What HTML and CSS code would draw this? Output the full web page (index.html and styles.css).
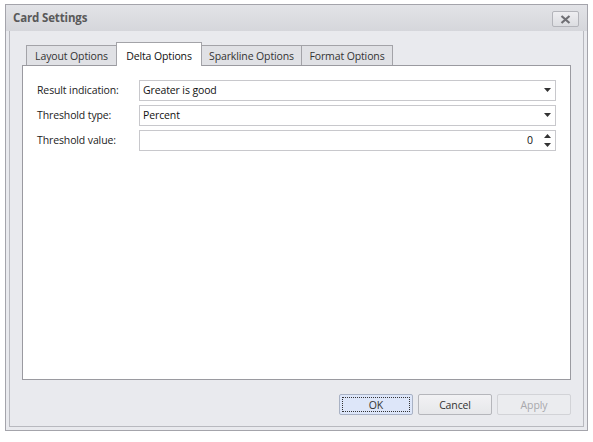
FILE: index.html
```html
<!DOCTYPE html>
<html>
<head>
<meta charset="utf-8">
<link rel="stylesheet" href="styles.css">
</head>
<body>
<div class="window">
  <div class="titlebar">
    <span class="title">Card Settings</span>
    <button class="close" aria-label="Close">
      <svg width="11" height="9" viewBox="0 0 11 9"><path d="M1.5 1 L9.5 8 M9.5 1 L1.5 8" stroke="#6f6f74" stroke-width="2.2" fill="none"/></svg>
    </button>
  </div>
  <div class="frame">
    <div class="tabcontrol">
      <div class="tabs">
        <div class="tab t-layout">Layout Options</div>
        <div class="tab active t-delta">Delta Options</div>
        <div class="tab t-spark">Sparkline Options</div>
        <div class="tab t-format">Format Options</div>
      </div>
      <div class="panel">
        <div class="row">
          <label class="lbl">Result indication:</label>
          <div class="editor"><span class="val">Greater is good</span><span class="dd"><svg width="7" height="4" viewBox="0 0 7 4"><path d="M0 0 H7 L3.5 4 Z" fill="#333"/></svg></span></div>
        </div>
        <div class="row">
          <label class="lbl">Threshold type:</label>
          <div class="editor"><span class="val">Percent</span><span class="dd"><svg width="7" height="4" viewBox="0 0 7 4"><path d="M0 0 H7 L3.5 4 Z" fill="#333"/></svg></span></div>
        </div>
        <div class="row">
          <label class="lbl">Threshold value:</label>
          <div class="editor spin"><span class="val num">0</span><span class="spinbtns"><svg width="7" height="13" viewBox="0 0 7 13"><path d="M0 4 H7 L3.5 0 Z M0 9 H7 L3.5 13 Z" fill="#333"/></svg></span></div>
        </div>
      </div>
    </div>
    <div class="buttons">
      <button class="btn focused">OK</button>
      <button class="btn">Cancel</button>
      <button class="btn disabled">Apply</button>
    </div>
  </div>
</div>
</body>
</html>
```
FILE: styles.css
```css
html, body {
  margin: 0;
  padding: 0;
  background: #ffffff;
}
body {
  font-family: "Open Sans", "Noto Sans", sans-serif;
  font-size: 10.5px;
  letter-spacing: -0.12px;
  color: #222;
}
.window {
  margin: 4px 0 0 5px;
  width: 583px;
  height: 427px;
  box-sizing: border-box;
  border: 1px solid #a4a4ab;
  background: #e9eaee;
  display: flex;
  flex-direction: column;
}
.titlebar {
  height: 26px;
  flex: none;
  background: linear-gradient(#e2e3e7, #d5d6db);
  display: flex;
  align-items: center;
  justify-content: space-between;
  padding: 0 8px 0 7px;
}
.title {
  font-weight: bold;
  font-size: 11.5px;
  letter-spacing: -0.15px;
  color: #595959;
  margin-top: -1px;
}
.close {
  width: 27px;
  height: 16px;
  margin-top: 2px;
  padding: 0;
  border: 1px solid #b3b4ba;
  border-radius: 2px;
  background: linear-gradient(#eeeef1, #dcdde1);
  display: flex;
  align-items: center;
  justify-content: center;
}
.frame {
  flex: 1;
  margin: 0 3px 3px 3px;
  border: 1px solid #b8b9bf;
  border-top: 0;
  display: flex;
  flex-direction: column;
  padding: 11px 12px 0 12px;
}
.tabcontrol {
  display: flex;
  flex-direction: column;
}
.tabs {
  display: flex;
  align-items: flex-end;
  height: 23px;
  padding-left: 4px;
  position: relative;
  z-index: 1;
}
.tab {
  height: 20px;
  box-sizing: border-box;
  border: 1px solid #a3a3a8;
  border-bottom: 0;
  background: #e0e1e5;
  color: #333;
  display: flex;
  align-items: center;
  justify-content: center;
  margin-right: -1px;
}
.t-layout { width: 91px; }
.t-delta { width: 86px; }
.t-spark { width: 101px; }
.t-format { width: 92px; }
.tab.active {
  height: 24px;
  background: #ffffff;
  margin-bottom: -1px;
  padding-top: 3px;
  color: #111;
}
.panel {
  height: 315px;
  box-sizing: border-box;
  border: 1px solid #9a9aa0;
  background: #ffffff;
  padding: 14px 14px 0 14px;
  display: flex;
  flex-direction: column;
  gap: 4px;
}
.row {
  display: flex;
  align-items: center;
  height: 21px;
}
.lbl {
  width: 102px;
  flex: none;
  color: #222;
  padding-bottom: 1px;
}
.editor {
  flex: 1;
  height: 21px;
  box-sizing: border-box;
  border: 1px solid #c8c8cc;
  background: #fff;
  display: flex;
  align-items: center;
  padding-left: 3px;
}
.val {
  flex: 1;
  color: #111;
  padding-bottom: 1px;
}
.val.num {
  text-align: right;
  padding-right: 6px;
}
.dd, .spinbtns {
  width: 16px;
  display: flex;
  justify-content: center;
  align-items: center;
}
.dd { padding-bottom: 1px; }
.buttons {
  display: flex;
  justify-content: flex-end;
  gap: 5px;
  margin-top: 14px;
}
.btn {
  width: 74px;
  height: 21px;
  box-sizing: border-box;
  border: 1px solid #b5b6bb;
  border-radius: 2px;
  background: linear-gradient(#f2f2f4, #e6e7ea);
  font-family: inherit;
  font-size: 10.5px;
  letter-spacing: -0.12px;
  color: #333;
  padding: 0;
}
.btn.focused {
  background: #dde6f9;
  border-color: #a9b2c4;
  outline: 1px dotted #333;
  outline-offset: -4px;
}
.btn.disabled {
  color: #a8a8ac;
  border-color: #d2d3d7;
  background: #ebecef;
}
```
